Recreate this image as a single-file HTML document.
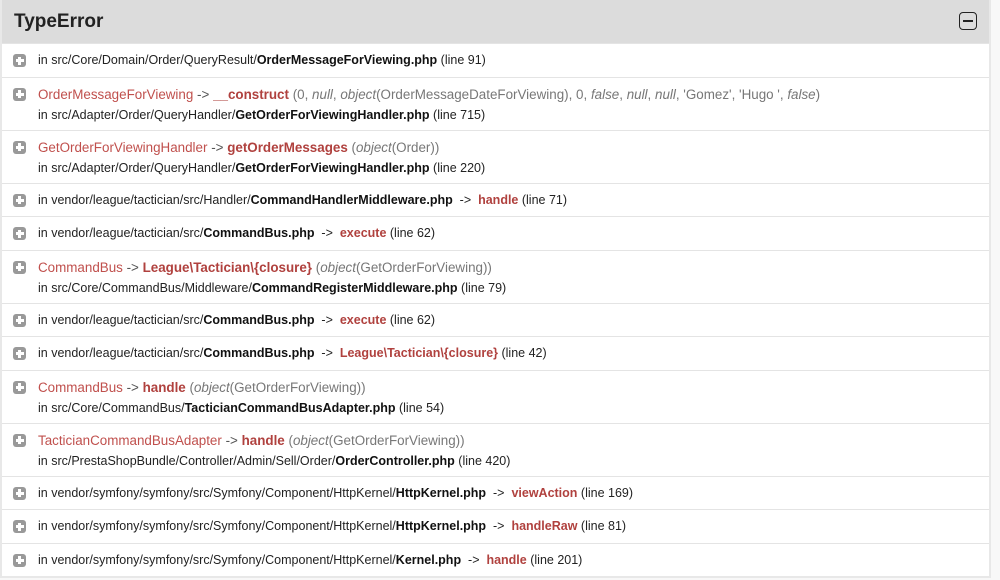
<!DOCTYPE html>
<html><head><style>
body{margin:0;background:#f8f8f8;font-family:"Liberation Sans",Arial,sans-serif;width:1000px;height:580px;overflow:hidden}
.box{position:absolute;left:0;top:0;width:987px;border:2px solid #e8e8e8;border-top:0;background:#fff}
.hd{height:43px;background:#dcdcdc;position:relative}
.hd h2{margin:0;position:absolute;left:12px;top:11px;font-size:19px;font-weight:bold;color:#222}
.mn{position:absolute;left:957px;top:12px;width:16px;height:16px;border:1.5px solid #222;border-radius:4px}
.mn:after{content:"";position:absolute;left:3px;right:3px;top:7px;height:2px;background:#222}
.r{border-top:1px solid #e4e4e4;position:relative;padding:0 0 0 36px;font-size:12.5px;color:#222}
.r.s{height:32.5px;line-height:33px;white-space:nowrap}
.r.d{height:52px}
.r.d .a{position:absolute;top:9px;left:36px;font-size:13.4px;color:#777;white-space:nowrap}
.r.d .b{position:absolute;top:30px;left:36px;white-space:nowrap}
.i{position:absolute;left:11px;width:13px;height:13px;background:#999;border-radius:3px}
.r.s .i{top:10px}.r.d .i{top:10px}
.i:before{content:"";position:absolute;left:2.5px;right:2.5px;top:5px;height:3px;background:#fff}
.i:after{content:"";position:absolute;top:2.5px;bottom:2.5px;left:5px;width:3px;background:#fff}
b{color:#111}
.c{color:#c0504d}
.f{color:#b0413e;font-weight:bold}
.a i{font-style:italic}
.ar{color:#555}
</style></head><body>
<div class="box">
<div class="hd"><h2>TypeError</h2><div class="mn"></div></div>
<div class="r s"><span class="i"></span>in src/Core/Domain/Order/QueryResult/<b>OrderMessageForViewing.php</b> (line 91)</div>
<div class="r d"><span class="i"></span><div class="a"><span class="c">OrderMessageForViewing</span> <span class="ar">-&gt;</span> <span class="f">__construct</span> (0, <i>null</i>, <i>object</i>(OrderMessageDateForViewing), 0, <i>false</i>, <i>null</i>, <i>null</i>, 'Gomez', 'Hugo ', <i>false</i>)</div><div class="b">in src/Adapter/Order/QueryHandler/<b>GetOrderForViewingHandler.php</b> (line 715)</div></div>
<div class="r d"><span class="i"></span><div class="a"><span class="c">GetOrderForViewingHandler</span> <span class="ar">-&gt;</span> <span class="f">getOrderMessages</span> (<i>object</i>(Order))</div><div class="b">in src/Adapter/Order/QueryHandler/<b>GetOrderForViewingHandler.php</b> (line 220)</div></div>
<div class="r s"><span class="i"></span>in vendor/league/tactician/src/Handler/<b>CommandHandlerMiddleware.php</b> &nbsp;-&gt;&nbsp; <span class="f">handle</span> (line 71)</div>
<div class="r s"><span class="i"></span>in vendor/league/tactician/src/<b>CommandBus.php</b> &nbsp;-&gt;&nbsp; <span class="f">execute</span> (line 62)</div>
<div class="r d"><span class="i"></span><div class="a"><span class="c">CommandBus</span> <span class="ar">-&gt;</span> <span class="f">League\Tactician\{closure}</span> (<i>object</i>(GetOrderForViewing))</div><div class="b">in src/Core/CommandBus/Middleware/<b>CommandRegisterMiddleware.php</b> (line 79)</div></div>
<div class="r s"><span class="i"></span>in vendor/league/tactician/src/<b>CommandBus.php</b> &nbsp;-&gt;&nbsp; <span class="f">execute</span> (line 62)</div>
<div class="r s"><span class="i"></span>in vendor/league/tactician/src/<b>CommandBus.php</b> &nbsp;-&gt;&nbsp; <span class="f">League\Tactician\{closure}</span> (line 42)</div>
<div class="r d"><span class="i"></span><div class="a"><span class="c">CommandBus</span> <span class="ar">-&gt;</span> <span class="f">handle</span> (<i>object</i>(GetOrderForViewing))</div><div class="b">in src/Core/CommandBus/<b>TacticianCommandBusAdapter.php</b> (line 54)</div></div>
<div class="r d"><span class="i"></span><div class="a"><span class="c">TacticianCommandBusAdapter</span> <span class="ar">-&gt;</span> <span class="f">handle</span> (<i>object</i>(GetOrderForViewing))</div><div class="b">in src/PrestaShopBundle/Controller/Admin/Sell/Order/<b>OrderController.php</b> (line 420)</div></div>
<div class="r s"><span class="i"></span>in vendor/symfony/symfony/src/Symfony/Component/HttpKernel/<b>HttpKernel.php</b> &nbsp;-&gt;&nbsp; <span class="f">viewAction</span> (line 169)</div>
<div class="r s"><span class="i"></span>in vendor/symfony/symfony/src/Symfony/Component/HttpKernel/<b>HttpKernel.php</b> &nbsp;-&gt;&nbsp; <span class="f">handleRaw</span> (line 81)</div>
<div class="r s"><span class="i"></span>in vendor/symfony/symfony/src/Symfony/Component/HttpKernel/<b>Kernel.php</b> &nbsp;-&gt;&nbsp; <span class="f">handle</span> (line 201)</div>
</div>
</body></html>
